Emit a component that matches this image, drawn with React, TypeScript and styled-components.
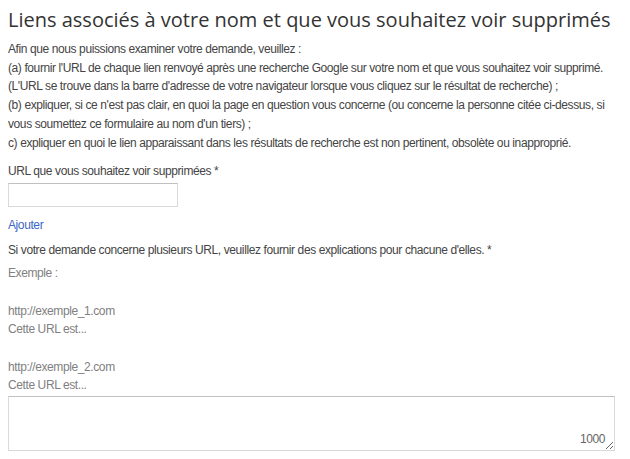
import styled, { createGlobalStyle } from "styled-components";
import React from "react";

const GlobalStyle = createGlobalStyle`
  body {
    margin: 0;
    background: #ffffff;
  }
`;

const Page = styled.div`
  padding: 6px 8px 0 8px;
  font-family: "Liberation Sans", Arial, sans-serif;
  font-size: 12px;
  letter-spacing: -0.4px;
  line-height: 19px;
  color: #444444;
`;

const Title = styled.h1`
  margin: 0 0 6px 0;
  font-family: "Open Sans", sans-serif;
  font-weight: 400;
  font-size: 20px;
  letter-spacing: 0;
  line-height: 28px;
  color: #333333;
  white-space: nowrap;
`;

const Intro = styled.p`
  margin: 0 0 10px 0;
  line-height: 18.7px;
`;

const Label = styled.div`
  margin: 0;
`;

const UrlInput = styled.input`
  display: block;
  box-sizing: border-box;
  width: 170px;
  height: 24px;
  margin: 2px 0 9px 0;
  border: 1px solid #d9d9d9;
  border-top-color: #c0c0c0;
  padding: 0 4px;
  font: inherit;
`;

const AddLink = styled.a`
  display: inline-block;
  color: #3b66c4;
  text-decoration: none;
  cursor: pointer;
  margin-bottom: 6px;
`;

const Hints = styled.div`
  margin-top: 4px;
  color: #808080;
  line-height: 18px;
`;

const Hint = styled.div<{ $gap?: boolean }>`
  margin-top: ${(p) => (p.$gap ? "20px" : "0")};
`;

const AreaWrap = styled.div`
  position: relative;
  margin-top: 2px;
  width: 607px;
`;

const Area = styled.textarea`
  display: block;
  box-sizing: border-box;
  width: 100%;
  height: 55px;
  border: 1px solid #d9d9d9;
  border-top-color: #c0c0c0;
  resize: both;
  font: inherit;
`;

const Counter = styled.span`
  position: absolute;
  right: 10px;
  bottom: 2px;
  font-size: 12px;
  color: #666666;
`;

export default function App() {
  return (
    <>
      <GlobalStyle />
      <Page>
        <Title>Liens associés à votre nom et que vous souhaitez voir supprimés</Title>
        <Intro>
          Afin que nous puissions examiner votre demande, veuillez :<br />
          (a) fournir l'URL de chaque lien renvoyé après une recherche Google sur votre nom et
          que vous souhaitez voir supprimé.<br />
          (L'URL se trouve dans la barre d'adresse de votre navigateur lorsque vous cliquez sur
          le résultat de recherche) ;<br />
          (b) expliquer, si ce n'est pas clair, en quoi la page en question vous concerne (ou
          concerne la personne citée ci-dessus, si vous soumettez ce formulaire au nom d'un
          tiers) ;<br />
          c) expliquer en quoi le lien apparaissant dans les résultats de recherche est non
          pertinent, obsolète ou inapproprié.
        </Intro>
        <Label>URL que vous souhaitez voir supprimées *</Label>
        <UrlInput type="text" />
        <AddLink>Ajouter</AddLink>
        <Label>
          Si votre demande concerne plusieurs URL, veuillez fournir des explications pour chacune
          d'elles. *
        </Label>
        <Hints>
          <Hint>Exemple :</Hint>
          <Hint $gap>http://exemple_1.com</Hint>
          <Hint>Cette URL est...</Hint>
          <Hint $gap>http://exemple_2.com</Hint>
          <Hint>Cette URL est...</Hint>
        </Hints>
        <AreaWrap>
          <Area />
          <Counter>1000</Counter>
        </AreaWrap>
      </Page>
    </>
  );
}
